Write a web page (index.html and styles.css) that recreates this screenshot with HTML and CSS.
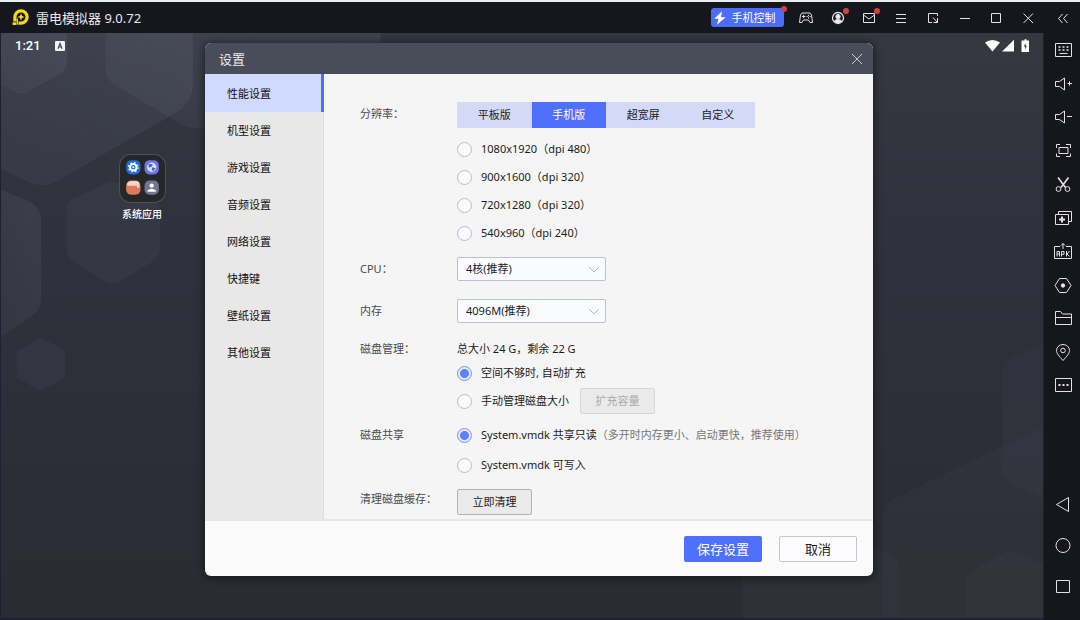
FILE: index.html
```html
<!DOCTYPE html>
<html lang="zh-CN">
<head>
<meta charset="utf-8">
<title>雷电模拟器</title>
<meta name="viewport" content="width=device-width, initial-scale=1">
<link rel="stylesheet" href="styles.css">
</head>
<body>
<div class="window">
  <header class="titlebar">
    <svg class="logo" viewBox="0 0 17 17" aria-hidden="true">
      <path d="M9 .3a7.700 7.700 0 0 1 0 15.400H6.500V12.500H9a4.500 4.500 0 1 0-4.500-4.500v4.500H1.300V8A7.700 7.700 0 0 1 9 .3z" fill="#f5d721"/>
      <path d="M.6 13.300h3.600v2.700H.6z" fill="#f5d721"/>
      <path d="M9 4.300 10 7l2.600 1L10 9l-1 2.700L8 9 5.400 8 8 7z" fill="#f5d721"/>
      <path d="M5.300 9.500v6.200" stroke="#f5d721" stroke-width="1.400"/>
    </svg>
    <h1 class="app-name">雷电模拟器 9.0.72</h1>
    <button class="phone-btn">
      <svg viewBox="0 0 12 14" aria-hidden="true"><path d="M8 .3.300 7.800h4.200l-.5 2L3 13.700l8.700-7.500H7z" fill="#fff"/></svg>
      手机控制<i class="dot"></i>
    </button>
    <nav class="win-actions">
      <button aria-label="手柄"><svg viewBox="0 0 16 16"><path d="M4 3h8l1.500 2 1 7.500h-2.500L10.500 10h-5L4 12.500H1.500l1-7.500z"/><path d="M4 6.500h3.400M5.700 4.800v3.400M10.500 4.800v1.400M10.500 7.200v1.400M11.500 6.600h1.300M8.500 6.600h1.300"/></svg></button>
      <button aria-label="账号"><svg viewBox="0 0 16 16"><circle cx="8" cy="8" r="5.500" stroke-width="1.300"/><circle cx="8" cy="6.600" r="2.200" fill="#eee"/><path d="M4.200 11.500c1-2.600 6.600-2.600 7.600 0L8 13.200z" fill="#eee"/></svg><i class="dot"></i></button>
      <button aria-label="消息"><svg viewBox="0 0 16 16"><path d="M2.500 3.500h11v9h-11zM2.500 5 8 9l5.500-4"/></svg><i class="dot"></i></button>
      <button aria-label="菜单"><svg viewBox="0 0 16 16"><path d="M3 4.500h10M3 8.500h10M3 12.500h10"/></svg></button>
      <button aria-label="小窗"><svg viewBox="0 0 16 16"><path d="M7 12.500H3.500v-9h9V6M8 7.500l4.500 5M12.500 8v4.500H8.500"/></svg></button>
      <button aria-label="最小化"><svg viewBox="0 0 16 16"><path d="M3 8.500h10"/></svg></button>
      <button aria-label="最大化"><svg viewBox="0 0 16 16"><path d="M3.500 3.500h9v9h-9z"/></svg></button>
      <button aria-label="关闭"><svg viewBox="0 0 16 16"><path d="m3.500 3.500 9.500 9.500M13 3.500 3.500 13"/></svg></button>
    </nav>
    <button class="collapse" aria-label="收起"><svg viewBox="0 0 16 16"><path d="M7.500 4 3.500 8.500l4 4.500M12.500 4l-4 4.500 4 4.500"/></svg></button>
  </header>

  <div class="workspace">
    <main class="stage">
      <svg class="wallpaper" viewBox="0 33 1044 586" preserveAspectRatio="xMidYMid slice" aria-hidden="true">
        <defs>
          <linearGradient id="bg" x1="0" y1="0" x2="0" y2="1">
            <stop offset="0" stop-color="#353741"/><stop offset=".35" stop-color="#2f313c"/><stop offset=".7" stop-color="#2c2e38"/><stop offset="1" stop-color="#292c32"/>
          </linearGradient>
          <linearGradient id="hex" x1="0" y1="1" x2="1" y2="0">
            <stop offset="0" stop-color="#8d98a8" stop-opacity=".06"/><stop offset="1" stop-color="#9ea6b8" stop-opacity=".1"/>
          </linearGradient>
          <filter id="soft" x="-10%" y="-10%" width="120%" height="125%"><feDropShadow dx="0" dy="2" stdDeviation="3" flood-color="#15161d" flood-opacity=".2"/></filter>
        </defs>
        <rect y="33" width="1044" height="586" fill="url(#bg)"/>
        <g fill="url(#hex)" stroke="#8c93a8" stroke-opacity=".06" filter="url(#soft)">
          <path d="M-9 20V164L28 182Q41 188 54 182L176 112Q192 102 192 84V20z"/>
          <path d="M105 20V68Q105 79 115 85L183 125Q195 131 207 125L380 60V20z"/>
          <path d="M-9 20V79L13 91Q20 95 27 91L60 73Q66 69 66 62V20z"/>
          <path d="M-9 186 30 203Q40 209 40 222V298Q40 310 31 316L-9 343z"/>
        </g>
        <g fill="#8d98a8" fill-opacity=".06" stroke="#8c93a8" stroke-opacity=".05" filter="url(#soft)">
          <path d="M66 210Q66 203 73 199L104 185Q112 181 120 185L151 199Q159 203 159 210V249Q159 257 151 262L120 281Q112 285 104 281L73 262Q66 257 66 249z"/>
          <path d="M16 352 40 339 64 351V378L40 391 16 378z"/>
        </g>
        <g fill="#858ba5" fill-opacity=".045" stroke="#8c93a8" stroke-opacity=".04">
          <path d="M1060 338 1015 358Q1004 364 1004 375V470Q1004 480 1014 485L1060 505z"/>
          <path d="M883 640V520Q883 508 893 501L1060 420V640z"/>
          <path d="M743 640V560L820 520 890 556Q900 562 900 574V640z"/>
          <path d="M966 640V583Q966 577 972 573L1004 555Q1011 551 1018 554L1060 575V640z"/>
        </g>
      </svg>
      <div class="status">
        <span>1:21</span>
        <svg class="ime" viewBox="0 0 10 10" aria-hidden="true"><rect width="10" height="10" rx="1" fill="#f2f2f2"/><path d="M3 7.800 5 2.500l2 5.300M3.600 6h2.800" fill="none" stroke="#444955" stroke-width="1.200"/></svg>
        <svg class="signals" viewBox="0 0 46 14" aria-hidden="true"><path d="M1 3.500Q8.500-1.500 16 3.500L8.500 12.500z" fill="#fff"/><path d="M30 .8V12.500H18z" fill="#fff"/><path d="M39 1.500h1.500V.3h2v1.200H45v11.500H37.500V1.500z" fill="#fff"/><path d="m41.500 4-1.700 3.600h1.400v2.900l1.700-3.700h-1.400z" fill="#33353f"/></svg>
      </div>
      <a class="folder" href="#">
        <svg viewBox="0 0 46 48" aria-hidden="true">
          <rect x=".5" y=".5" width="45" height="47" rx="11" fill="#262729" stroke="#505158"/>
          <rect x="7" y="6" width="14" height="14" rx="5" fill="#1f6fd0"/><circle cx="14" cy="13" r="3.200" fill="none" stroke="#fff" stroke-width="2"/><circle cx="14" cy="13" r="4.700" fill="none" stroke="#fff" stroke-dasharray="1.800 1.900"/><circle cx="14" cy="13" r="1" fill="#fff"/>
          <rect x="25" y="6" width="14" height="14" rx="5" fill="#6878dc"/><circle cx="32" cy="13" r="4.600" fill="#d8deff"/><path d="m29 9.500 4 .5-1 2.500-3 1zM32.500 13l3.500 1-2.500 3-1.500-1.500z" fill="#5261c8"/>
          <rect x="7" y="26" width="14" height="14" rx="5" fill="#e07a5f"/><path d="M8 29q1-2.500 4-2.500h4q4 0 4 3V33h-2.500v-2H8z" fill="#f7d2c6"/>
          <rect x="25" y="26" width="14" height="14" rx="5" fill="#71778f"/><circle cx="32" cy="31" r="2.100" fill="#fff"/><path d="M28 37v-1.500q4-3 8 0V37z" fill="#fff"/>
        </svg>
        <span>系统应用</span>
      </a>
    </main>

    <aside class="toolbar">
      <div class="tools">
        <button aria-label="键盘"><svg viewBox="0 0 18 17"><path d="M1.500 1.500h16v13h-16z"/><path d="M4.500 5h2m2 0h2m2 0h2M4.500 8h2m2 0h2m2 0h2" stroke-width="1.600"/><path d="M5.500 11.500h8"/></svg></button>
        <button aria-label="音量加"><svg viewBox="0 0 18 17"><path d="M1.500 5.500h4l5-3.500v12l-5-3.500h-4zM13.500 7.500h4.500M15.500 5.300v4.400"/></svg></button>
        <button aria-label="音量减"><svg viewBox="0 0 18 17"><path d="M1.500 5.500h4l5-3.500v12l-5-3.500h-4zM13 7.500h5"/></svg></button>
        <button aria-label="全屏"><svg viewBox="0 0 18 17"><path d="M2.500 5V1.500H6M12 1.500h4.500V5M16.500 10.500v3H12M6 13.500H2.500v-3M5 4.500h9v6H5z"/></svg></button>
        <button aria-label="截图"><svg viewBox="0 0 18 17"><path d="m4 1.500 7.500 10M14.500 1.500 7 11.500" stroke-width="1.600"/><circle cx="4.500" cy="13" r="2.400"/><circle cx="13.500" cy="13" r="2.400"/></svg></button>
        <button aria-label="多开"><svg viewBox="0 0 18 17"><path d="M4.500 4V1.500h13v10H15M1.500 4.500h13v10h-13z"/><path d="M5 9.500h6M8 6.500v6" stroke-width="2"/></svg></button>
        <button aria-label="安装APK"><svg viewBox="0 0 18 17"><path d="M6 3.500H.5v12h17v-12H12M9 6V.5M7 2.500l2-2 2 2"/><path d="M3 13.500V8.500h2.500v5M3 11h2.500M7.500 13.500v-5H10v2.800H7.500M12.500 8v5.500M15.500 8l-2.500 3 2.500 2.500"/></svg></button>
        <button aria-label="录制"><svg viewBox="0 0 18 17"><path d="M5.500 1.500h7l4.500 7-4.500 7h-7L1 8.500z"/><circle cx="9" cy="8.500" r="1.700" fill="#eee"/></svg></button>
        <button aria-label="共享文件夹"><svg viewBox="0 0 18 17"><path d="M1.500 14.500v-13h5l2 2.500h9v10.500zM1.500 7.500h16"/></svg></button>
        <button aria-label="定位"><svg viewBox="0 0 18 17"><path d="M9 16.500C5 12 2.500 9.500 2.500 6.500a6.500 6 0 0 1 13 0C15.500 9.500 13 12 9 16.500z"/><circle cx="9" cy="6.500" r="2.300"/></svg></button>
        <button aria-label="更多"><svg viewBox="0 0 18 17"><path d="M1.500 1.500h16v13h-16z"/><path d="M4.500 8h2m2 0h2m2 0h2" stroke-width="2"/></svg></button>
      </div>
      <div class="nav-keys">
        <button aria-label="返回"><svg viewBox="0 0 18 17"><path d="M14.500 1.500v14L2.500 8.500z"/></svg></button>
        <button aria-label="主页"><svg viewBox="0 0 18 17"><circle cx="9" cy="8.500" r="7"/></svg></button>
        <button aria-label="任务"><svg viewBox="0 0 18 17"><path d="M2.500 2.500h13v12h-13z"/></svg></button>
      </div>
    </aside>
  </div>

  <section class="dialog" role="dialog" aria-labelledby="dlg-title">
    <header class="dialog-head">
      <h2 id="dlg-title">设置</h2>
      <button aria-label="关闭设置"><svg viewBox="0 0 12 12"><path d="m1 1 10 10M11 1 1 11"/></svg></button>
    </header>
    <div class="dialog-body">
      <nav class="menu">
        <a class="active" href="#">性能设置</a>
        <a href="#">机型设置</a>
        <a href="#">游戏设置</a>
        <a href="#">音频设置</a>
        <a href="#">网络设置</a>
        <a href="#">快捷键</a>
        <a href="#">壁纸设置</a>
        <a href="#">其他设置</a>
      </nav>
      <form class="form" id="settings">
        <div class="row" role="group" aria-labelledby="l-res">
          <span class="label" id="l-res">分辨率：</span>
          <div class="field">
            <div class="segments">
              <button type="button">平板版</button><button type="button" class="on">手机版</button><button type="button">超宽屏</button><button type="button">自定义</button>
            </div>
            <label class="option"><input type="radio" name="res">1080x1920（dpi 480）</label>
            <label class="option"><input type="radio" name="res">900x1600（dpi 320）</label>
            <label class="option"><input type="radio" name="res">720x1280（dpi 320）</label>
            <label class="option"><input type="radio" name="res">540x960（dpi 240）</label>
          </div>
        </div>
        <div class="row row-cpu">
          <label class="label" for="cpu">CPU：</label>
          <div class="select"><select id="cpu"><option>4核(推荐)</option></select><svg viewBox="0 0 12 7" aria-hidden="true"><path d="m1 1 5 5 5-5"/></svg></div>
        </div>
        <div class="row row-memory">
          <label class="label" for="mem">内存</label>
          <div class="select"><select id="mem"><option>4096M(推荐)</option></select><svg viewBox="0 0 12 7" aria-hidden="true"><path d="m1 1 5 5 5-5"/></svg></div>
        </div>
        <div class="row row-disk" role="group" aria-labelledby="l-disk">
          <span class="label" id="l-disk">磁盘管理：</span>
          <div class="field">
            <p class="info">总大小 24 G，剩余 22 G</p>
            <label class="option"><input type="radio" name="disk" checked>空间不够时, 自动扩充</label>
            <div class="inline">
              <label class="option"><input type="radio" name="disk">手动管理磁盘大小</label>
              <button type="button" class="plain" disabled>扩充容量</button>
            </div>
          </div>
        </div>
        <div class="row row-share" role="group" aria-labelledby="l-share">
          <span class="label" id="l-share">磁盘共享</span>
          <div class="field share">
            <label class="option"><input type="radio" name="share" checked><span>System.vmdk 共享只读<span class="hint">（多开时内存更小、启动更快，推荐使用）</span></span></label>
            <label class="option"><input type="radio" name="share">System.vmdk 可写入</label>
          </div>
        </div>
        <div class="row row-clean">
          <span class="label">清理磁盘缓存：</span>
          <div class="field"><button type="button" class="plain">立即清理</button></div>
        </div>
      </form>
    </div>
    <footer class="dialog-foot">
      <button class="save" form="settings" type="button">保存设置</button>
      <button class="cancel" type="button">取消</button>
    </footer>
  </section>
</div>
</body>
</html>
```
FILE: styles.css
```css
* { box-sizing: border-box; }

body, h1, h2, p { margin: 0; }

body {
  font: 11px/20px "Noto Sans", "Noto Sans CJK SC", sans-serif;
  color: #1c1c1e;
  background: #16171d;
}

button, select, input { font: inherit; color: inherit; margin: 0; }

button {
  padding: 0;
  border: 0;
  background: none;
  cursor: pointer;
}

svg { display: block; }
a { color: inherit; text-decoration: none; }

.window {
  position: relative;
  display: flex;
  flex-direction: column;
  min-height: 100vh;
}

/* Title bar */
.titlebar {
  display: flex;
  align-items: center;
  height: 33px;
  padding: 0 9px 0 12px;
  border-top: 2px solid #e9eef2;
  background: #16171c;
  color: #e9e9ec;
}

.logo { width: 17px; height: 17px; }

.app-name {
  margin-left: 7px;
  font-size: 13px;
  font-weight: 400;
  line-height: 18px;
}

.titlebar button { position: relative; }

.titlebar .phone-btn {
  display: flex;
  align-items: center;
  justify-content: center;
  gap: 6px;
  width: 73px;
  height: 19px;
  margin-left: auto;
  border-radius: 3px;
  background: #4c6cfb;
  color: #fff;
  white-space: nowrap;
}

.phone-btn svg { width: 12px; height: 14px; }

.dot {
  position: absolute;
  top: -2px;
  right: -3px;
  width: 6px;
  height: 6px;
  border-radius: 50%;
  background: #d2403f;
}

.win-actions {
  display: flex;
  justify-content: space-between;
  width: 238px;
  margin: 0 19px 0 14px;
}

.win-actions svg, .collapse svg { width: 16px; height: 16px; }

.titlebar nav svg, .collapse svg, .toolbar svg {
  fill: none;
  stroke: #e2e2e6;
}

/* Emulator screen and toolbar */
.workspace { display: flex; flex: 1; }

.stage {
  position: relative;
  flex: 1;
  overflow: hidden;
  border: solid #211f33;
  border-width: 0 1px 2px;
  color: #fff;
}

.wallpaper {
  position: absolute;
  inset: 0;
  width: 100%;
  height: 100%;
}

.status {
  position: relative;
  display: flex;
  align-items: center;
  padding: 3px 13px 0 14px;
  font: 500 13px/20px Roboto, sans-serif;
}

.ime { width: 10px; height: 10px; margin-left: 14px; }
.signals { width: 46px; height: 14px; margin-left: auto; }

.folder {
  position: absolute;
  top: 121px;
  left: 111px;
  display: flex;
  flex-direction: column;
  align-items: center;
  gap: 1px;
  width: 60px;
  font-size: 10px;
  font-weight: 500;
}

.folder svg { width: 47px; height: 49px; }

.toolbar {
  display: flex;
  flex-direction: column;
  justify-content: space-between;
  width: 36px;
  padding: 9px 8px 25px 10px;
  background: #16171c;
}

.toolbar svg { width: 18px; height: 17px; }
.tools, .nav-keys { display: flex; flex-direction: column; }
.tools { justify-content: space-between; height: 352px; }
.nav-keys { gap: 24px; }

/* Settings dialog */
.dialog {
  position: absolute;
  top: 43px;
  left: 0;
  right: 2px;
  width: min(668px, 100% - 32px);
  margin: 0 auto;
  overflow: hidden;
  border-radius: 6px;
  background: #fbfbfb;
  box-shadow: 0 1px 7px 2px rgba(15, 16, 20, .55);
}

.dialog-head {
  display: flex;
  align-items: center;
  justify-content: space-between;
  height: 31px;
  padding: 0 10px 0 14px;
  background: #494d5a;
  color: #e9eaee;
}

.dialog-head h2 { font-size: 13px; font-weight: 400; }

.dialog-head svg {
  width: 12px;
  height: 12px;
  fill: none;
  stroke: #c9ccd3;
}

.dialog-body {
  display: flex;
  border-bottom: 2px solid #e7e7e7;
  background: #f5f5f5;
}

.menu {
  flex: none;
  width: 119px;
  border-right: 1px solid #dedede;
  background: #e8e8e8;
  color: #101010;
}

.menu a {
  display: block;
  padding: 0 22px;
  line-height: 37px;
}

.menu .active {
  margin-right: -1px;
  padding-top: 1px;
  border-right: 3px solid #4f70f5;
  background: #d0d9ff;
}

.form { flex: 1; padding: 28px 16px 4px 36px; }
.row { display: grid; grid-template-columns: 97px 1fr; }
.row-cpu, .row-clean { margin-top: 10px; }
.row-memory { margin-top: 18px; }
.row-disk { margin-top: 16px; }
.row-share { margin-top: 6px; }

.label { line-height: 24px; color: #4b4b4f; }
.row-disk .label, .row-clean .label { line-height: 20px; }
.row-share .label { line-height: 28px; }

.segments {
  display: grid;
  grid-template-columns: repeat(4, 1fr);
  width: 298px;
  margin-bottom: 7px;
  background: #d3d9f6;
}

.segments button { height: 26px; }
.segments .on { background: #4e70fd; color: #fff; }

.option {
  display: flex;
  align-items: center;
  gap: 9px;
  height: 28px;
  white-space: nowrap;
}

.option input {
  appearance: none;
  flex: none;
  width: 15px;
  height: 15px;
  border: 1px solid #babccd;
  border-radius: 50%;
  background: #fbfbff;
}

.option input:checked {
  border-color: #7b92f5;
  background: radial-gradient(circle, #5f80fb 4px, #e4eaff 5px);
}

.hint { color: #77777b; }

.select { position: relative; width: 149px; }

.select select {
  appearance: none;
  display: block;
  width: 100%;
  height: 24px;
  padding: 0 24px 0 8px;
  border: 1px solid #bcbfd0;
  border-radius: 2px;
  background: #fafbff;
}

.select svg {
  position: absolute;
  top: 9px;
  right: 6px;
  width: 12px;
  height: 7px;
  fill: none;
  stroke: #b4b6be;
  pointer-events: none;
}

.inline { display: flex; align-items: center; gap: 11px; }
.share { display: grid; gap: 2px; }

.plain {
  width: 75px;
  height: 26px;
  border: 1px solid #b2b2b2;
  border-radius: 2px;
  background: #eaeaea;
}

.plain:disabled { border-color: #d6d6d6; color: #aaa; }

.dialog-foot {
  display: flex;
  justify-content: flex-end;
  gap: 17px;
  padding: 15px 16px 14px;
  font-size: 13px;
}

.dialog-foot button {
  width: 78px;
  height: 26px;
  border-radius: 2px;
}

.save { background: #4e70fd; color: #fff; }
.cancel.cancel { border: 1px solid #c3c5d4; background: #fcfcff; }
```
